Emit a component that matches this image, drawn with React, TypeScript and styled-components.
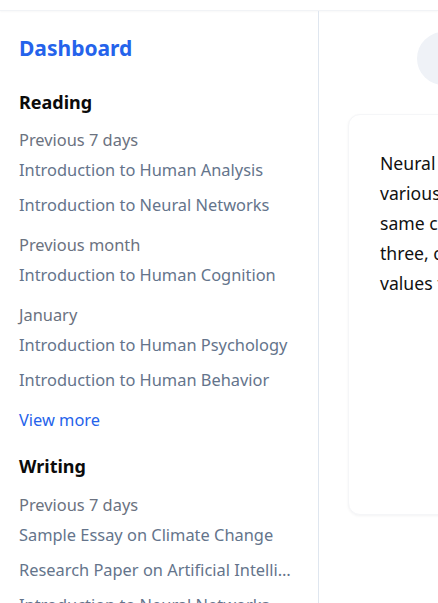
import React from "react";
import styled, { createGlobalStyle } from "styled-components";

const Global = createGlobalStyle`
  html, body { margin: 0; padding: 0; background: #ffffff; overflow: hidden; }
  body { font-family: "Noto Sans", "Open Sans", sans-serif; -webkit-font-smoothing: antialiased; }
  * { box-sizing: border-box; }
`;

const Page = styled.div`
  width: 438px;
  height: 603px;
  display: flex;
  flex-direction: column;
  overflow: hidden;
`;

const TopBar = styled.header`
  height: 11px;
  flex: none;
  background: #ffffff;
  border-bottom: 1px solid #f1f3f6;
  box-shadow: 0 1px 2px rgba(15, 23, 42, 0.03);
`;

const Body = styled.div`
  flex: 1;
  display: flex;
  min-height: 0;
`;

const Sidebar = styled.aside`
  width: 319px;
  flex: none;
  border-right: 1px solid #dfe6ef;
  padding: 23px 25px 0 19px;
  display: flex;
  flex-direction: column;
  overflow: hidden;
`;

const Brand = styled.h1`
  margin: 0;
  font-size: 21px;
  line-height: 28px;
  font-weight: 700;
  color: #2563eb;
`;

const SectionTitle = styled.h2<{ $top: number }>`
  margin: ${(p) => p.$top}px 0 0;
  font-size: 18px;
  line-height: 24px;
  font-weight: 700;
  color: #0b0b0b;
`;

const Group = styled.div<{ $top: number }>`
  display: flex;
  flex-direction: column;
  margin-top: ${(p) => p.$top}px;
`;

const GroupLabel = styled.div`
  font-size: 16.4px;
  line-height: 22px;
  color: #6b7280;
`;

const Item = styled.a`
  display: block;
  margin-top: 8px;
  font-size: 16.4px;
  line-height: 22px;
  color: #64748b;
  text-decoration: none;
  white-space: nowrap;
  overflow: hidden;
  text-overflow: ellipsis;
  & + & { margin-top: 13px; }
`;

const MoreLink = styled.a`
  display: block;
  margin-top: 18px;
  font-size: 16.4px;
  line-height: 22px;
  color: #2563eb;
  text-decoration: none;
`;

const Main = styled.main`
  flex: 1;
  min-width: 0;
  padding: 21px 0 0 29px;
  display: flex;
  flex-direction: column;
  overflow: hidden;
`;

const HeaderRow = styled.div`
  display: flex;
  justify-content: flex-start;
  padding-left: 69px;
`;

const Avatar = styled.div`
  width: 53px;
  height: 53px;
  flex: none;
  border-radius: 50%;
  background: #eff2f7;
`;

const Card = styled.section`
  margin-top: 29px;
  width: 760px;
  height: 401px;
  flex: none;
  border-radius: 12px;
  background: #ffffff;
  border: 1px solid #f5f6f8;
  box-shadow: 0 1px 3px rgba(15, 23, 42, 0.05);
  padding: 33px 31px;
`;

const CardText = styled.p`
  margin: 0;
  font-size: 17.6px;
  line-height: 30px;
  color: #111111;
  white-space: pre-line;
`;

type GroupData = { label: string; items: string[] };

const reading: GroupData[] = [
  { label: "Previous 7 days", items: ["Introduction to Human Analysis", "Introduction to Neural Networks"] },
  { label: "Previous month", items: ["Introduction to Human Cognition"] },
  { label: "January", items: ["Introduction to Human Psychology", "Introduction to Human Behavior"] },
];

const writing: GroupData[] = [
  {
    label: "Previous 7 days",
    items: [
      "Sample Essay on Climate Change",
      "Research Paper on Artificial Intelligence in Modern Healthcare",
      "Introduction to Neural Networks",
    ],
  },
];

export default function App() {
  return (
    <>
      <Global />
      <Page>
        <TopBar />
        <Body>
          <Sidebar>
            <Brand>Dashboard</Brand>
            <SectionTitle $top={28}>Reading</SectionTitle>
            {reading.map((g, i) => (
              <Group key={g.label + i} $top={i === 0 ? 15 : 18}>
                <GroupLabel>{g.label}</GroupLabel>
                {g.items.map((it) => (
                  <Item key={it} href="#">{it}</Item>
                ))}
              </Group>
            ))}
            <MoreLink href="#">View more</MoreLink>
            <SectionTitle $top={23}>Writing</SectionTitle>
            {writing.map((g, i) => (
              <Group key={g.label + i} $top={16}>
                <GroupLabel>{g.label}</GroupLabel>
                {g.items.map((it) => (
                  <Item key={it} href="#">{it}</Item>
                ))}
              </Group>
            ))}
          </Sidebar>
          <Main>
            <HeaderRow>
              <Avatar />
            </HeaderRow>
            <Card>
              <CardText>
                {"Neural networks are built from layers of simple connected units that\nvarious inputs pass through, each unit applying the same rule to the\nsame computation on its inputs, usually grouped in sets of two or\nthree, combining weighted sums with an activation to produce\nvalues that feed the next layer."}
              </CardText>
            </Card>
          </Main>
        </Body>
      </Page>
    </>
  );
}
